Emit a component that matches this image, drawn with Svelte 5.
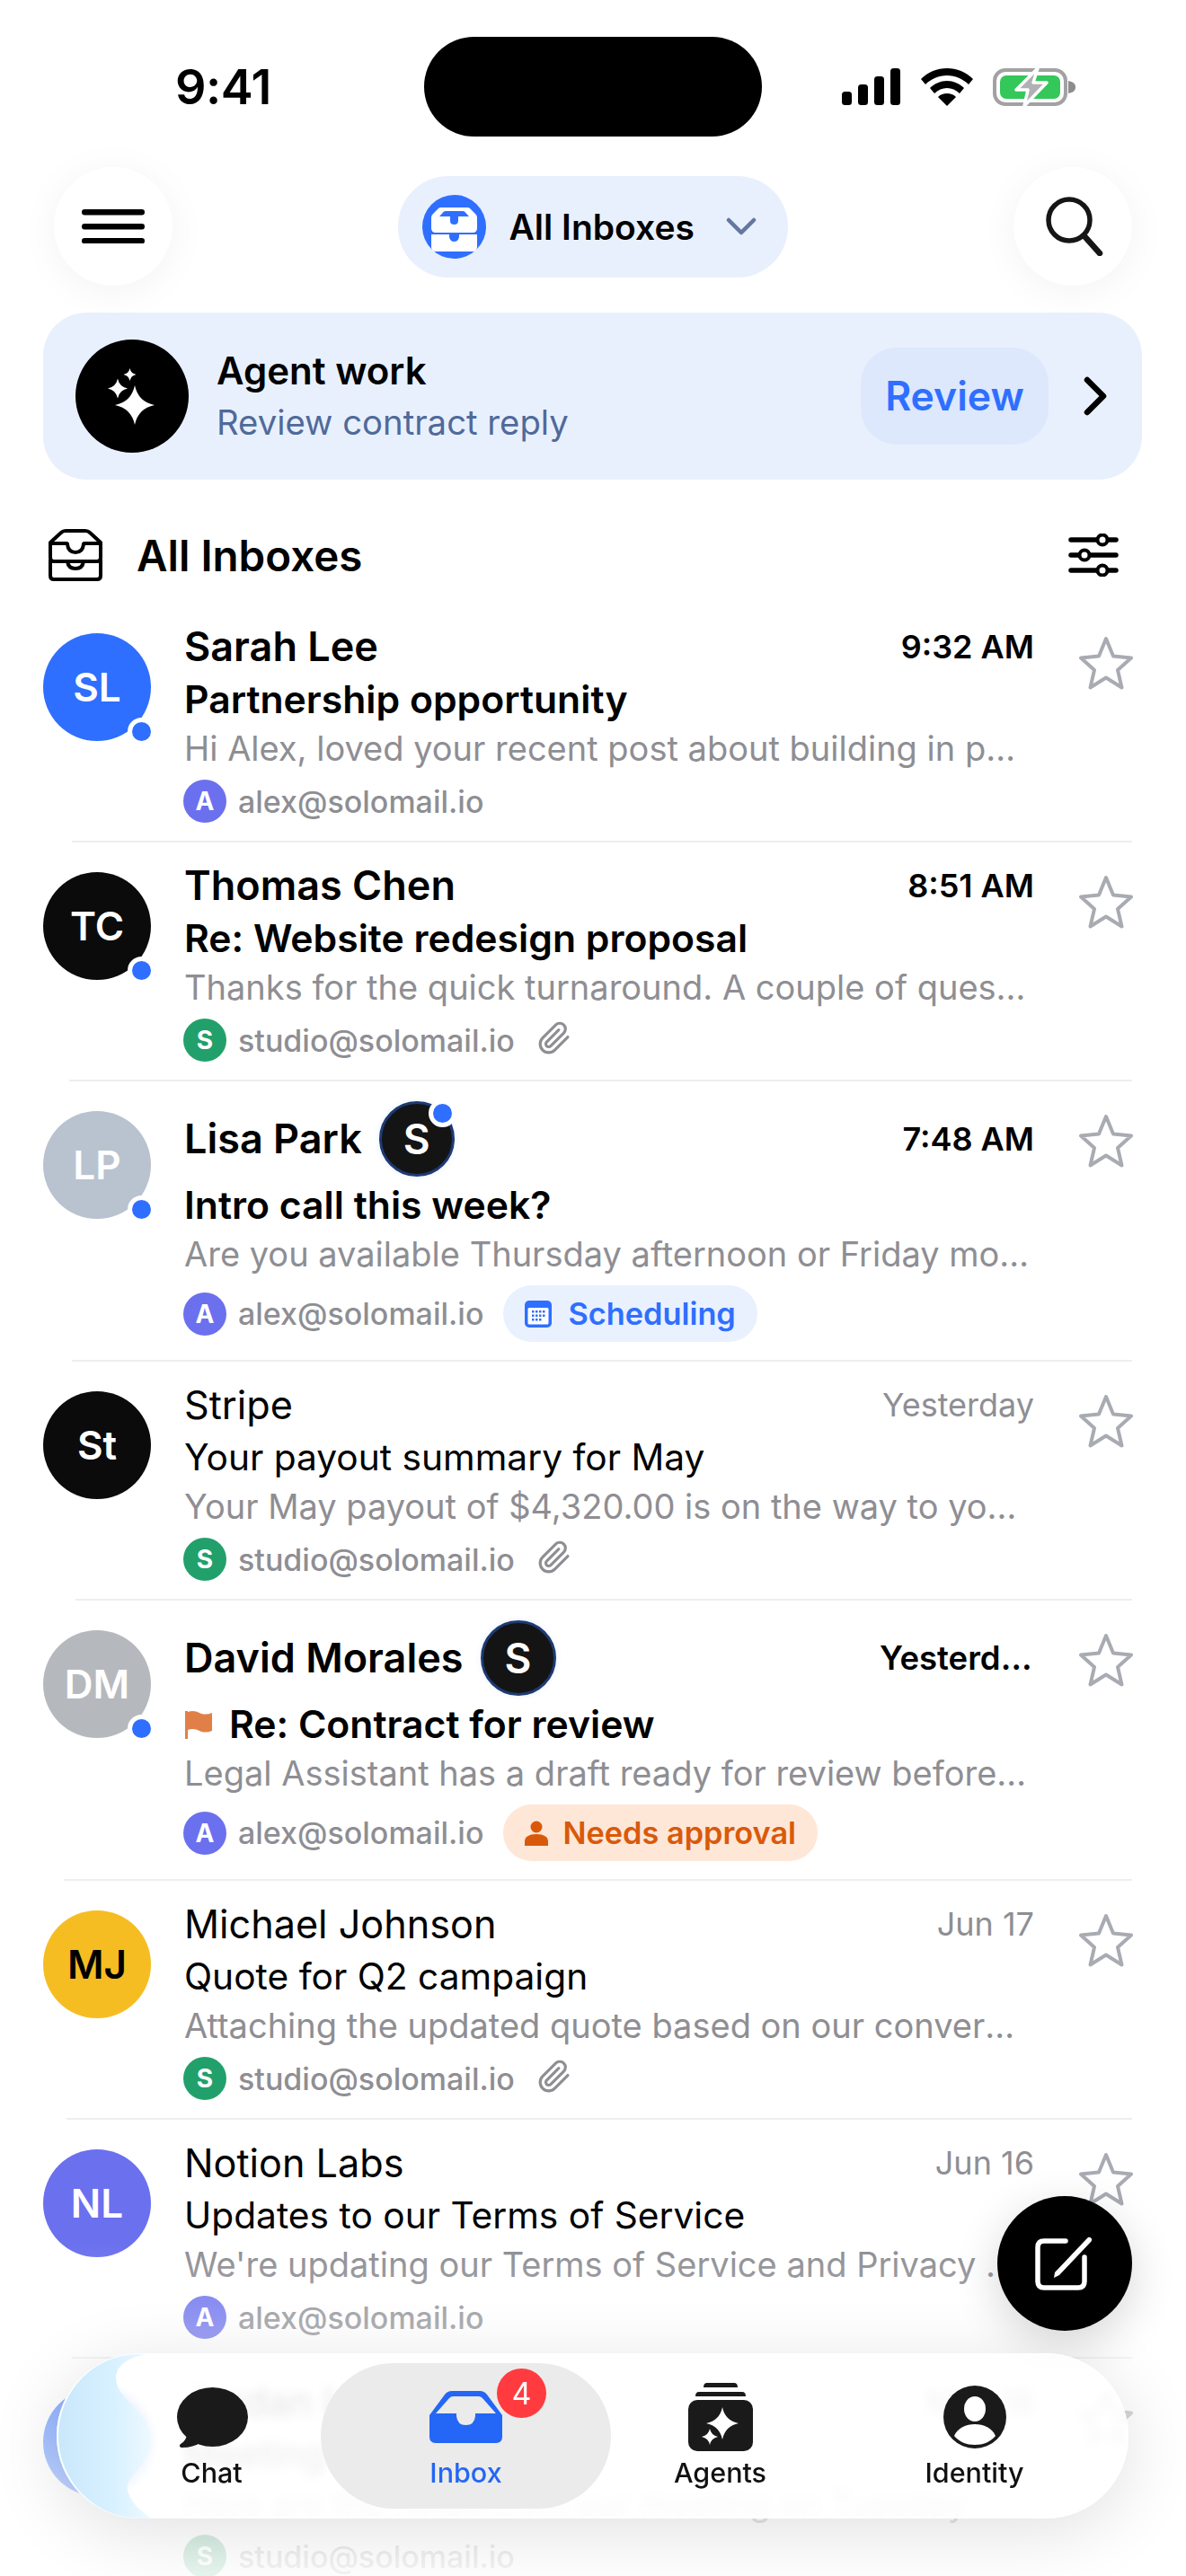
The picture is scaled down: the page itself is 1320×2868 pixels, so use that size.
<script>
  const spark = (cx, cy, r) => {
    const k = r * 0.17;
    return `M${cx} ${cy - r}Q${cx + k} ${cy - k} ${cx + r} ${cy}Q${cx + k} ${cy + k} ${cx} ${cy + r}Q${cx - k} ${cy + k} ${cx - r} ${cy}Q${cx - k} ${cy - k} ${cx} ${cy - r}Z`;
  };
  const rows = [
    { ini: 'SL', color: '#2f6fff', dot: true, name: 'Sarah Lee', time: '9:32 AM', unread: true, sub: 'Partnership opportunity', prev: 'Hi Alex, loved your recent post about building in public and wanted to reach out', acct: 'a', line: 80 },
    { ini: 'TC', color: '#0b0b0b', dot: true, name: 'Thomas Chen', time: '8:51 AM', unread: true, sub: 'Re: Website redesign proposal', prev: 'Thanks for the quick turnaround. A couple of questions on the scope', acct: 's', clip: true, line: 77 },
    { ini: 'LP', color: '#b9c2cf', dot: true, name: 'Lisa Park', time: '7:48 AM', unread: true, badge: true, badgeDot: true, sub: 'Intro call this week?', prev: 'Are you available Thursday afternoon or Friday morning for a call', acct: 'a', tag: 'sched', line: 80 },
    { ini: 'St', color: '#0b0b0b', name: 'Stripe', time: 'Yesterday', sub: 'Your payout summary for May', prev: 'Your May payout of $4,320.00 is on the way to your bank account', acct: 's', clip: true, line: 84 },
    { ini: 'DM', color: '#b5b9be', dot: true, name: 'David Morales', time: 'Yesterday', unread: true, badge: true, short: true, flag: true, sub: 'Re: Contract for review', prev: 'Legal Assistant has a draft ready for review before it goes out', acct: 'a', tag: 'appr', line: 71 },
    { ini: 'MJ', color: '#f6bd22', dark: true, name: 'Michael Johnson', time: 'Jun 17', sub: 'Quote for Q2 campaign', prev: 'Attaching the updated quote based on our conversation last week', acct: 's', clip: true, line: 74 },
    { ini: 'NL', color: '#6b70ee', name: 'Notion Labs', time: 'Jun 16', sub: 'Updates to our Terms of Service', prev: "We're updating our Terms of Service and Privacy Policy soon", acct: 'a', line: 80 },
    { ini: 'JL', color: '#2f6fff', name: 'Jordan Lee', time: 'May 18', sub: 'Meeting notes', prev: 'Here are the notes from our meeting on Tuesday', acct: 's', line: 80 }
  ];
  const accts = {
    a: { l: 'A', c: '#6b70ee', t: 'alex@solomail.io' },
    s: { l: 'S', c: '#22a06b', t: 'studio@solomail.io' }
  };
</script>

<div class="phone">
  <div class="status">
    <div class="clock">9:41</div>
    <div class="island"></div>
    <div class="sys">
      <svg width="65" height="41" viewBox="0 0 65 41"><rect x="0" y="26" width="11" height="15" rx="3.5"/><rect x="18" y="18" width="11" height="23" rx="3.5"/><rect x="36" y="9" width="11" height="32" rx="3.5"/><rect x="54" y="0" width="11" height="41" rx="3.5"/></svg>
      <svg width="58" height="42" viewBox="0 0 58 42"><path d="M29 0C18 0 8 4 0 12l5 6c6-6 15-10 24-10s18 4 24 10l5-6C50 4 40 0 29 0Z"/><path d="M29 14c-7 0-14 3-19 8l5 6c4-4 9-6 14-6s10 2 14 6l5-6c-5-5-12-8-19-8Z"/><path d="M29 28c-4 0-7 1-10 4l10 10 10-10c-3-3-6-4-10-4Z"/></svg>
      <svg width="94" height="44" viewBox="0 0 94 44"><rect x="2" y="3" width="79" height="38" rx="12" fill="none" stroke="#a2a2a2" stroke-width="4"/><rect x="8" y="9" width="67" height="26" rx="7" fill="#34c759"/><path d="M84 15c5 1 8 3 8 7s-3 6-8 7Z" fill="#8c8c8c"/><path d="M50 1 26 25h13l-4 18 25-26H45Z" fill="#b1b1b3" stroke="#fff" stroke-width="3.5" stroke-linejoin="round"/></svg>
    </div>
  </div>

  <div class="topbar">
    <button class="round" aria-label="Menu"><svg width="70" height="38" viewBox="0 0 70 38"><g fill="#000"><rect y="0" width="70" height="6.5" rx="3.2"/><rect y="16" width="70" height="6.5" rx="3.2"/><rect y="32" width="70" height="6.5" rx="3.2"/></g></svg></button>
    <div class="picker">
      <span class="pick-ico"><svg width="71" height="71" viewBox="0 0 71 71"><circle cx="35.5" cy="35.5" r="35.5" fill="#2f6fff"/><path fill-rule="evenodd" fill="#fff" d="M10 25Q10 23 12 21L18 15Q19 14 21 14H50Q52 14 53 15L59 21Q61 23 61 25V37Q61 42 56 42H15Q10 42 10 37ZM19 24H31V29Q31 33 35.500 33T40 29V24H52L47 18.500Q46.500 18 45 18H26Q24.500 18 24 18.500Z"/><path fill="#fff" d="M10 44H30V47Q31 52 35.500 52T41 47V44H61V58Q61 63 56 63H15Q10 63 10 58Z"/></svg></span>
      <span class="pick-t">All Inboxes</span>
      <svg width="34" height="20" viewBox="0 0 34 20"><path d="M3 3l14 14L31 3" fill="none" stroke="#64789f" stroke-width="4.500" stroke-linecap="round" stroke-linejoin="round"/></svg>
    </div>
    <button class="round" aria-label="Search"><svg width="64" height="66" viewBox="0 0 64 66"><circle cx="26" cy="26" r="23" fill="none" stroke="#161616" stroke-width="5.500"/><path d="M43 44l17 19" stroke="#161616" stroke-width="6.500" stroke-linecap="round"/></svg></button>
  </div>

  <div class="agent">
    <span class="ag-ico"><svg width="126" height="126" viewBox="0 0 126 126"><g fill="#fff"><path d={spark(66, 73, 22)}/><path d={spark(47, 54.500, 11)}/><path d={spark(60.500, 39, 7)}/></g></svg></span>
    <div class="ag-txt">
      <div class="ag-t">Agent work</div>
      <div class="ag-s">Review contract reply</div>
    </div>
    <div class="review">Review</div>
    <svg class="ag-chev" width="26" height="44" viewBox="0 0 26 44"><path d="M4 4l18 18L4 40" fill="none" stroke="#000" stroke-width="6.500" stroke-linecap="round" stroke-linejoin="round"/></svg>
  </div>

  <div class="lhead">
    <svg width="60" height="58" viewBox="0 0 60 58" fill="none" stroke="#000" stroke-width="4" stroke-linejoin="round"><path d="M2 15 14 4q2-2 5-2h22q3 0 5 2l12 11v17q0 4-4 4H6q-4 0-4-4Z"/><path d="M2 16h18q1 0 1 1 1 9 9 9t9-9q0-1 1-1h18"/><path d="M2 34v18q0 4 4 4h48q4 0 4-4V34"/><path d="M21 36q1 8 9 8t9-8"/></svg>
    <span class="lh-t">All Inboxes</span>
    <svg class="lh-f" width="56" height="48" viewBox="0 0 56 48"><g stroke="#000" stroke-width="5.500" stroke-linecap="round"><path d="M3 7h50M3 24h50M3 41h50"/></g><g fill="#fff" stroke="#000" stroke-width="4"><circle cx="38" cy="7" r="5.500"/><circle cx="18" cy="24" r="5.500"/><circle cx="38" cy="41" r="5.500"/></g></svg>
  </div>

  <div class="list">
    {#each rows as r}
      <div class="row">
        <div class="av" class:dark={r.dark} style="background:{r.color}">
          {r.ini}
          {#if r.dot}<span class="dot"></span>{/if}
        </div>
        <div class="body">
          <div class="l1" class:tall={r.badge}>
            <span class="name" class:b={r.unread}>{r.name}</span>
            {#if r.badge}
              <span class="sb">S{#if r.badgeDot}<i></i>{/if}</span>
            {/if}
            <span class="time" class:b={r.unread} class:short={r.short}>{r.time}</span>
          </div>
          <div class="l2" class:b={r.unread}>
            {#if r.flag}
              <svg width="32" height="32" viewBox="0 0 32 32"><path d="M1 1h3v31H1Z" fill="#e08048"/><path d="M4 2c5-2 9-1 13 1s9 2 14 0v20c-5 2-10 2-14 0s-8-3-13-1Z" fill="#e08048"/></svg>
            {/if}
            {r.sub}
          </div>
          <div class="l3">{r.prev}</div>
          <div class="l4" class:hastag={r.tag}>
            <span class="ac" style="background:{accts[r.acct].c}">{accts[r.acct].l}</span>
            <span class="addr">{accts[r.acct].t}</span>
            {#if r.clip}
              <svg class="clip" width="38" height="42" viewBox="0 0 24 26.500" fill="none" stroke="#8e8e93" stroke-width="2" stroke-linecap="round" stroke-linejoin="round"><path d="M21.440 11.050l-9.190 9.190a6 6 0 0 1-8.490-8.490l9.190-9.190a4 4 0 0 1 5.660 5.660l-9.200 9.190a2 2 0 0 1-2.830-2.830l8.490-8.480"/></svg>
            {/if}
            {#if r.tag === 'sched'}
              <span class="tag blue">
                <svg width="30" height="30" viewBox="0 0 30 30"><rect width="30" height="30" rx="5" fill="#2f6fff"/><rect x="3.500" y="8" width="23" height="18.500" rx="1.500" fill="#fff"/><g fill="#2f6fff"><rect x="8" y="11" width="2.500" height="2.500"/><rect x="12" y="11" width="2.500" height="2.500"/><rect x="16" y="11" width="2.500" height="2.500"/><rect x="20" y="11" width="2.500" height="2.500"/><rect x="8" y="15.500" width="2.500" height="2.500"/><rect x="12" y="15.500" width="2.500" height="2.500"/><rect x="16" y="15.500" width="2.500" height="2.500"/><rect x="20" y="15.500" width="2.500" height="2.500"/><rect x="8" y="20" width="2.500" height="2.500"/><rect x="12" y="20" width="2.500" height="2.500"/><rect x="16" y="20" width="2.500" height="2.500"/></g></svg>
                Scheduling
              </span>
            {:else if r.tag === 'appr'}
              <span class="tag orange">
                <svg width="26" height="28" viewBox="0 0 26 28"><circle cx="13" cy="7" r="6.500" fill="#d9590b"/><path d="M0 28v-5c0-5 5-8 13-8s13 3 13 8v5Z" fill="#d9590b"/></svg>
                Needs approval
              </span>
            {/if}
          </div>
        </div>
        <svg class="star" width="62" height="60" viewBox="0 0 62 60"><path d="M31 3l8 19.500 20 2-15 13.500 4.500 19.500L31 46.500 13.500 57.500 18 38 3 24.500l20-2Z" fill="none" stroke="#a9abb2" stroke-width="4" stroke-linejoin="round"/></svg>
        <div class="rule" style="left:{r.line}px"></div>
      </div>
    {/each}
  </div>

  <div class="fade"></div>

  <button class="fab" aria-label="Compose"><svg width="66" height="66" viewBox="0 0 66 66" fill="none"><path d="M34 8H10q-7 0-7 7v38q0 7 7 7h38q7 0 7-7V26" stroke="#fff" stroke-width="5.500" stroke-linecap="round"/><path d="M22 43 58 5q2-2 4-.5t.5 4L27 46l-6 3Z" fill="#fff"/></svg></button>

  <nav class="tabs">
    <svg class="sheen" width="125" height="184" viewBox="0 0 125 184"><defs><linearGradient id="sh" x1="0" x2="1" y1="0" y2="0"><stop offset="0" stop-color="#c9e7fb"/><stop offset=".6" stop-color="#d8f1ff"/><stop offset="1" stop-color="#eef9ff"/></linearGradient></defs><path d="M0 0H105C80 4 62 14 67 34 72 54 108 70 105 100 102 128 72 138 80 156 85 170 98 178 105 184H0Z" fill="url(#sh)"/></svg>
    <div class="tab">
      <span class="ti"><svg width="80" height="67" viewBox="0 0 80 67"><ellipse cx="40.500" cy="33" rx="39.500" ry="33" fill="#1a1a1a"/><path d="M12 48c1 7-2 12-7 15-2 2-1 4 2 4 8 0 15-2 21-6Z" fill="#1a1a1a"/></svg></span>
      <span class="tl">Chat</span>
    </div>
    <div class="tab on">
      <span class="ti"><svg width="81" height="58" viewBox="0 0 81 58"><path d="M0 27 17 4q3-4 8-4h31q5 0 8 4l17 23v24q0 7-7 7H7q-7 0-7-7Zm7-2h23v3q1 10 10.500 10T51 28v-3h23L59 8q-2-2-4-2H26q-2 0-4 2Z" fill="#2466f5" fill-rule="evenodd"/></svg><b class="count">4</b></span>
      <span class="tl">Inbox</span>
    </div>
    <div class="tab">
      <span class="ti"><svg width="72" height="76" viewBox="0 0 72 76"><g fill="#1a1a1a"><path d="M17 5q0-5 4-5h30q4 0 4 5Z"/><path d="M8 15q0-5 4-5h48q4 0 4 5Z"/><rect y="19" width="72" height="57" rx="10"/></g><g fill="#fff"><path d={spark(38, 45, 18)}/><path d={spark(24, 60, 9)}/></g></svg></span>
      <span class="tl">Agents</span>
    </div>
    <div class="tab">
      <span class="ti"><svg width="70" height="70" viewBox="0 0 70 70"><circle cx="35" cy="35" r="35" fill="#1a1a1a"/><ellipse cx="35" cy="26" rx="12" ry="14" fill="#fff"/><path d="M12 56c4-9 13-13 23-13s19 4 23 13c-6 7-14 10-23 10s-17-3-23-10Z" fill="#fff"/></svg></span>
      <span class="tl">Identity</span>
    </div>
  </nav>
</div>

<style>
  :global(body) { margin: 0; background: #fff; }
  .phone {
    position: relative;
    width: 1320px;
    height: 2868px;
    overflow: hidden;
    background: #fff;
    color: #000;
    font-family: Inter, "Liberation Sans", sans-serif;
  }
  button { border: 0; padding: 0; font: inherit; }

  .status {
    display: grid;
    grid-template-columns: 1fr 376px 1fr;
    align-items: center;
    height: 111px;
    padding-top: 41px;
  }
  .clock { font-size: 54px; font-weight: 600; padding-left: 195px; letter-spacing: -0.5px; }
  .island { height: 111px; border-radius: 56px; background: #000; }
  .sys { display: flex; align-items: center; padding-left: 89px; gap: 23px; }
  .sys svg:nth-child(3) { margin-left: -1px; }

  .topbar {
    display: flex;
    align-items: center;
    justify-content: space-between;
    padding: 0 60px;
    height: 132px;
    margin-top: 34px;
    position: relative;
    z-index: 2;
  }
  .round {
    width: 132px;
    height: 132px;
    border-radius: 50%;
    background: #fff;
    display: flex;
    align-items: center;
    justify-content: center;
    box-shadow: 0 6px 44px rgba(0, 0, 0, .05);
  }
  .round:last-child svg { margin-left: 3px; }
  .picker {
    display: flex;
    align-items: center;
    height: 113px;
    width: 434px;
    box-sizing: border-box;
    padding-left: 27px;
    border-radius: 56px;
    background: #e9f0fd;
    margin-left: -1px;
  }
  .pick-ico { width: 71px; height: 71px; }
  .pick-t { font-size: 39px; font-weight: 600; margin-left: 26px; width: 241px; white-space: nowrap; }

  .agent {
    display: flex;
    align-items: center;
    height: 186px;
    margin: 30px 49px 0 48px;
    padding: 0 39px 0 36px;
    border-radius: 48px;
    background: #e9f0fd;
  }
  .ag-ico { width: 126px; height: 126px; border-radius: 50%; background: #000; }
  .ag-txt { margin-left: 31px; flex: 1; }
  .ag-t { font-size: 42px; font-weight: 600; line-height: 52px; }
  .ag-s { font-size: 38.3px; line-height: 50px; margin-top: 6px; color: #4f6a9a; }
  .review {
    display: flex;
    align-items: center;
    justify-content: center;
    width: 209px;
    height: 108px;
    border-radius: 40px;
    background: #dde8fd;
    color: #2f6fff;
    font-size: 44.5px;
    font-weight: 600;
  }
  .ag-chev { margin-left: 39px; }

  .lhead {
    display: flex;
    align-items: center;
    height: 108px;
    padding: 30px 75px 0 54px;
  }
  .lh-t { font-size: 47.5px; font-weight: 600; margin-left: 38px; flex: 1; }

  .row {
    position: relative;
    display: flex;
    align-items: flex-start;
    padding: 21px 59px 22px 48px;
  }
  .av {
    position: relative;
    flex: none;
    width: 120px;
    height: 120px;
    margin-top: 12px;
    border-radius: 50%;
    display: flex;
    align-items: center;
    justify-content: center;
    color: #fff;
    font-size: 44px;
    font-weight: 600;
  }
  .av.dark { color: #000; }
  .dot {
    position: absolute;
    right: -5px;
    bottom: -5px;
    width: 21px;
    height: 21px;
    border: 5px solid #fff;
    border-radius: 50%;
    background: #2f6fff;
  }
  .body { flex: none; width: 946px; margin-left: 37px; }
  .l1 { display: flex; align-items: center; min-height: 54px; }
  .l1.tall { min-height: 85px; }
  .name { font-size: 43.2px; line-height: 54px; font-weight: 400; }
  .name.b { font-size: 45px; font-weight: 600; }
  .time {
    margin-left: auto;
    font-size: 36px;
    color: #8e8e93;
    white-space: nowrap;
    align-self: center;
  }
  .time.b { color: #000; font-weight: 600; }
  .time.short { font-size: 36.5px; max-width: 172px; overflow: hidden; text-overflow: ellipsis; }
  .sb {
    position: relative;
    flex: none;
    box-sizing: border-box;
    width: 84px;
    height: 84px;
    margin-left: 19px;
    border-radius: 50%;
    border: 3px solid #1d3a72;
    background: #141414;
    color: #fff;
    font-size: 46px;
    font-weight: 600;
    display: flex;
    align-items: center;
    justify-content: center;
    box-shadow: 0 0 6px rgba(47, 111, 255, .12);
  }
  .sb i {
    position: absolute;
    right: -5px;
    top: -5px;
    width: 21px;
    height: 21px;
    border: 5px solid #fff;
    border-radius: 50%;
    background: #2f6fff;
  }
  .l2 {
    display: flex;
    align-items: center;
    gap: 18px;
    font-size: 40.7px;
    line-height: 54px;
    margin-top: 5px;
    white-space: nowrap;
  }
  .l2.b { font-size: 42.7px; font-weight: 600; }
  .l3 {
    font-size: 38px;
    line-height: 50px;
    margin-top: 2px;
    padding-right: 4px;
    color: #8e8e93;
    white-space: nowrap;
    overflow: hidden;
    text-overflow: ellipsis;
  }
  .l4 { display: flex; align-items: center; height: 48px; margin-top: 10px; }
  .l4.hastag { height: 63px; }
  .ac {
    flex: none;
    width: 48px;
    height: 48px;
    border-radius: 50%;
    display: flex;
    align-items: center;
    justify-content: center;
    color: #fff;
    font-size: 28px;
    font-weight: 700;
    margin-left: -1px;
  }
  .addr { font-size: 34px; font-weight: 500; color: #8e8e93; margin-left: 13px; }
  .clip { margin-left: 25px; }
  .tag {
    display: flex;
    align-items: center;
    height: 63px;
    margin-left: 22px;
    padding: 0 24px;
    border-radius: 32px;
    font-size: 34.3px;
    font-weight: 600;
    gap: 18px;
    white-space: nowrap;
  }
  .tag.blue { background: #e9f1fe; color: #2f6fff; }
  .tag.orange { background: #fee7d7; color: #d9590b; gap: 16px; }
  .star { flex: none; margin: 15px 0 0 49px; }
  .rule { position: absolute; right: 60px; bottom: 0; height: 2.500px; background: #eeeeee; }

  .fade {
    position: absolute;
    left: 0;
    right: 0;
    top: 2500px;
    bottom: 0;
    background: linear-gradient(rgba(255, 255, 255, 0), rgba(255, 255, 255, .3) 25%, rgba(255, 255, 255, .9));
  }
  .fab {
    position: absolute;
    left: 1110px;
    top: 2445px;
    width: 150px;
    height: 150px;
    border-radius: 50%;
    background: #000;
    display: flex;
    align-items: center;
    justify-content: center;
    box-shadow: 0 14px 50px rgba(0, 0, 0, .16);
  }
  .tabs {
    position: absolute;
    left: 63px;
    top: 2620px;
    width: 1193px;
    height: 184px;
    box-sizing: border-box;
    display: flex;
    padding-left: 31px;
    border-radius: 92px;
    overflow: hidden;
    background: rgba(255, 255, 255, .8);
    -webkit-backdrop-filter: blur(6px);
    backdrop-filter: blur(6px);
    box-shadow: 0 14px 80px rgba(0, 0, 0, .12);
  }
  .tabs::after {
    content: "";
    position: absolute;
    inset: 0;
    border-radius: 92px;
    box-shadow: inset 2px 0 0 rgba(255, 255, 255, .95), inset 0 1px 0 rgba(255, 255, 255, .9);
    pointer-events: none;
  }
  .sheen { position: absolute; left: 0; top: 0; }
  .tab {
    position: relative;
    flex: none;
    width: 283px;
    display: flex;
    flex-direction: column;
    align-items: center;
    padding-top: 32px;
    color: #111;
  }
  .tab.on { color: #2466f5; }
  .tab.on::before {
    content: "";
    position: absolute;
    left: -20px;
    right: -20px;
    top: 11px;
    bottom: 11px;
    border-radius: 81px;
    background: #ebebeb;
  }
  .ti {
    position: relative;
    height: 78px;
    display: flex;
    align-items: center;
    justify-content: center;
  }
  .tl { position: relative; font-size: 30.5px; font-weight: 500; line-height: 36px; margin-top: 5px; }
  .count {
    position: absolute;
    left: 75px;
    top: -15px;
    width: 55px;
    height: 55px;
    border-radius: 50%;
    background: #ff3b3f;
    color: #fff;
    font-size: 34px;
    font-weight: 400;
    display: flex;
    align-items: center;
    justify-content: center;
  }
</style>
